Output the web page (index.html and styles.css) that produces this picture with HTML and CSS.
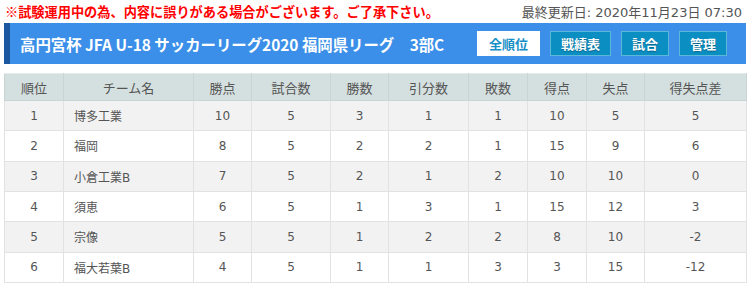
FILE: index.html
```html
<!DOCTYPE html>
<html lang="ja">
<head>
<meta charset="utf-8">
<link rel="stylesheet" href="styles.css">
</head>
<body>
<div class="page">
  <div class="topline">
    <span class="notice">※試験運用中の為、内容に誤りがある場合がございます。ご了承下さい。</span>
    <span class="updated">最終更新日: 2020年11月23日 07:30</span>
  </div>
  <div class="titlebar">
    <h1 class="title">高円宮杯 JFA U-18 サッカーリーグ2020 福岡県リーグ　3部C</h1>
    <nav class="btns">
      <span class="btn active">全順位</span>
      <span class="btn">戦績表</span>
      <span class="btn">試合</span>
      <span class="btn">管理</span>
    </nav>
  </div>
  <table class="standings">
    <colgroup>
      <col class="c1"><col class="c2"><col class="c3"><col class="c4"><col class="c5">
      <col class="c6"><col class="c7"><col class="c8"><col class="c9"><col class="c10">
    </colgroup>
    <thead>
      <tr><th>順位</th><th>チーム名</th><th>勝点</th><th>試合数</th><th>勝数</th><th>引分数</th><th>敗数</th><th>得点</th><th>失点</th><th>得失点差</th></tr>
    </thead>
    <tbody>
      <tr><td>1</td><td class="team">博多工業</td><td>10</td><td>5</td><td>3</td><td>1</td><td>1</td><td>10</td><td>5</td><td>5</td></tr>
      <tr><td>2</td><td class="team">福岡</td><td>8</td><td>5</td><td>2</td><td>2</td><td>1</td><td>15</td><td>9</td><td>6</td></tr>
      <tr><td>3</td><td class="team">小倉工業B</td><td>7</td><td>5</td><td>2</td><td>1</td><td>2</td><td>10</td><td>10</td><td>0</td></tr>
      <tr><td>4</td><td class="team">須恵</td><td>6</td><td>5</td><td>1</td><td>3</td><td>1</td><td>15</td><td>12</td><td>3</td></tr>
      <tr><td>5</td><td class="team">宗像</td><td>5</td><td>5</td><td>1</td><td>2</td><td>2</td><td>8</td><td>10</td><td>-2</td></tr>
      <tr><td>6</td><td class="team">福大若葉B</td><td>4</td><td>5</td><td>1</td><td>1</td><td>3</td><td>3</td><td>15</td><td>-12</td></tr>
    </tbody>
  </table>
</div>
</body>
</html>
```
FILE: styles.css
```css
html, body {
  margin: 0;
  padding: 0;
  background: #fff;
}
.page {
  padding: 0 4px;
  font-family: "DejaVu Sans", "Noto Sans CJK JP", sans-serif;
  color: #555;
}
.topline {
  height: 23px;
  display: flex;
  justify-content: space-between;
  align-items: center;
  padding: 0 4px 0 1px;
}
.notice {
  font-family: "Noto Sans CJK JP", sans-serif;
  font-weight: bold;
  font-size: 13.2px;
  color: #f00;
}
.updated {
  font-size: 13px;
  color: #555;
}
.titlebar {
  height: 41px;
  background: #3b8fe8;
  border-left: 6px solid #1b58a0;
  display: flex;
  align-items: center;
  justify-content: space-between;
  padding: 0 19px 0 10px;
  box-sizing: border-box;
}
.title {
  margin: 0;
  font-family: "Noto Sans CJK JP", sans-serif;
  font-size: 15.4px;
  font-weight: bold;
  color: #fff;
  white-space: nowrap;
}
.btns {
  display: flex;
  gap: 10px;
  flex-shrink: 0;
}
.btn {
  height: 25px;
  box-sizing: border-box;
  padding: 0 10px;
  display: flex;
  align-items: center;
  white-space: nowrap;
  flex-shrink: 0;
  font-family: "Noto Sans CJK JP", sans-serif;
  font-size: 13px;
  font-weight: bold;
  color: #fff;
  background: #0b8ec2;
  border: 1px solid #5cb8d8;
  text-shadow: 0 1px 1px rgba(0,0,0,0.3);
}
.btn.active {
  background: #fff;
  color: #1790c8;
  border-color: #fff;
  padding: 0 11px;
  text-shadow: none;
}
.standings {
  margin-top: 9px;
  width: 742px;
  border-collapse: collapse;
  table-layout: fixed;
  font-size: 12px;
}
.c1 { width: 59px; }
.c2 { width: 130px; }
.c3 { width: 58px; }
.c4 { width: 79px; }
.c5 { width: 58px; }
.c6 { width: 80px; }
.c7 { width: 59px; }
.c8 { width: 59px; }
.c9 { width: 58px; }
.c10 { width: 102px; }
.standings th {
  height: 26px;
  padding: 0;
  background: #d4dfdf;
  border: 1px solid #c9d4d4;
  border-top-color: #e4ebeb;
  font-family: "Noto Sans CJK JP", sans-serif;
  font-size: 13px;
  font-weight: normal;
  color: #555;
  text-align: center;
}
.standings td {
  height: 29.33px;
  padding: 0;
  border: 1px solid #e2e2e2;
  text-align: center;
  color: #555;
}
.standings tbody tr:nth-child(odd) td {
  background: #f2f2f2;
}
.standings td.team {
  text-align: left;
  padding-left: 10px;
}
```
